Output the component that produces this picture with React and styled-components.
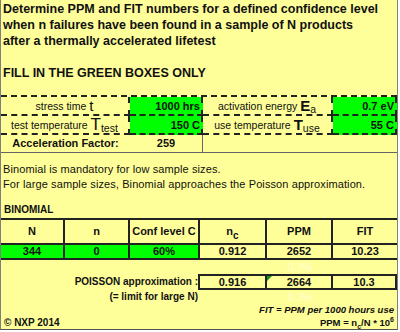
import React from 'react';
import styled, { createGlobalStyle } from 'styled-components';

const Global = createGlobalStyle`
  body {
    margin: 0;
    background: #fff;
    font-family: "Liberation Sans", Arial, sans-serif;
    color: #111;
  }
`;

const Frame = styled.div`
  width: 396px;
  height: 329px;
  background: #ffff99;
  border-left: 1px solid #7f7f7f;
  border-right: 1px solid #7f7f7f;
  border-bottom: 1px solid #555;
  display: flex;
  flex-direction: column;
  overflow: hidden;
`;

const Intro = styled.div`
  padding: 1px 2px 0;
  font-size: 12.5px;
  font-weight: bold;
  line-height: 16px;
  white-space: nowrap;

  p {
    margin: 0;
  }
  .fill {
    margin-top: 16px;
  }
`;

const ParamGrid = styled.div`
  margin-top: 14px;
  display: grid;
  grid-template-columns: 129px 73px 130px 1fr;
  grid-auto-rows: 19px;
  border-top: 2px dashed #222;
`;

const Label = styled.div`
  display: flex;
  align-items: center;
  justify-content: center;
  font-size: 10.5px;
  border-right: 2px dashed #222;
  border-bottom: 2px dashed #222;
  white-space: nowrap;
`;

const Value = styled.div`
  display: flex;
  align-items: center;
  justify-content: flex-end;
  padding-right: 1px;
  background: #00ff00;
  font-size: 11px;
  font-weight: bold;
  border-right: 2px dashed #222;
  border-bottom: 2px dashed #222;
`;

const Sym = styled.span`
  font-size: ${p => p.$size || 16}px;
  font-weight: ${p => (p.$bold ? 'bold' : 'normal')};
  margin-left: 3px;
  line-height: 1;
`;

const Sub = styled.span`
  font-size: ${p => p.$size || 10.5}px;
  position: relative;
  top: 4px;
  line-height: 1;
`;

const AccelRow = styled.div`
  display: grid;
  grid-template-columns: 129px 73px 1fr;
  height: 18px;
  border-bottom: 1px solid #666;
  font-size: 11px;
  font-weight: bold;

  div {
    display: flex;
    align-items: center;
    justify-content: center;
  }
  .num {
    border-right: 1px solid #666;
  }
`;

const Note = styled.div`
  padding: 9px 2px 0;
  font-size: 11px;
  line-height: 15px;
  letter-spacing: 0.1px;
  white-space: nowrap;

  p {
    margin: 0;
  }
`;

const SectionTitle = styled.div`
  padding: 11px 3px 0;
  font-size: 10px;
  font-weight: bold;
  line-height: 14px;
`;

const BinTable = styled.div`
  margin-top: 1px;
  display: grid;
  grid-template-columns: 64px 65px 70px 67px 66px 1fr;
  grid-template-rows: 25px 15px;
  border-top: 2px solid #222;
`;

const BinCell = styled.div`
  display: flex;
  align-items: center;
  justify-content: center;
  font-size: 11px;
  font-weight: bold;
  border-right: 2px solid #222;
  border-bottom: 2px solid #222;
  background: ${p => (p.$green ? '#00ff00' : 'transparent')};

  &:nth-child(6n) {
    border-right: none;
  }
`;

const PoissonArea = styled.div`
  display: grid;
  grid-template-columns: 199px 1fr;
  grid-template-rows: 14px 16px 14px;
  font-size: 10px;
  font-weight: bold;
`;

const LeftNote = styled.div`
  display: flex;
  align-items: center;
  justify-content: flex-end;
  padding-right: 2px;
  white-space: nowrap;
`;

const Ghost = styled.div`
  display: grid;
  grid-template-columns: 67px 66px 1fr;
  font-size: 11px;
  font-weight: normal;
  color: #ffffd6;

  span {
    grid-column: 2;
    display: flex;
    align-items: center;
    justify-content: center;
  }
`;

const PoissonBox = styled.div`
  display: grid;
  grid-template-columns: 67px 66px 1fr;
  border: 2px solid #222;
  margin-left: -2px;
`;

const PCell = styled.div`
  position: relative;
  display: flex;
  align-items: center;
  justify-content: center;
  font-size: 11px;
  font-weight: bold;
  border-right: ${p => (p.$last ? 'none' : '2px solid #222')};

  ${p =>
    p.$flag &&
    `&::before {
      content: '';
      position: absolute;
      top: 0;
      left: 0;
      border-top: 5px solid #1f8f1f;
      border-right: 5px solid transparent;
    }`}
`;

const FootLine = styled.div`
  display: flex;
  justify-content: ${p => (p.$split ? 'space-between' : 'flex-end')};
  align-items: center;
  padding: 0 3px;
  height: ${p => p.$h}px;
  font-size: 9.5px;
  font-weight: bold;
  font-style: ${p => (p.$italic ? 'italic' : 'normal')};
  white-space: nowrap;

  sup {
    font-size: 7px;
    line-height: 0;
  }
  sub {
    font-size: 7px;
    line-height: 0;
  }
  .copy {
    font-size: 10px;
    font-style: normal;
  }
`;

const App = () => {
  const binomial = {
    head: ['N', 'n', 'Conf level C', null, 'PPM', 'FIT'],
    values: ['344', '0', '60%', '0.912', '2652', '10.23'],
  };

  return (
    <>
      <Global />
      <Frame>
        <Intro>
          <p>Determine PPM and FIT numbers for a defined confidence level</p>
          <p>when n failures have been found in a sample of N products</p>
          <p>after a thermally accelerated lifetest</p>
          <p className="fill">FILL IN THE GREEN BOXES ONLY</p>
        </Intro>

        <ParamGrid>
          <Label>
            stress time<Sym $size={15}>t</Sym>
          </Label>
          <Value>1000 hrs</Value>
          <Label>
            activation energy<Sym $size={15} $bold>E</Sym>
            <Sub>a</Sub>
          </Label>
          <Value>0.7 eV</Value>

          <Label>
            test temperature<Sym $size={17}>T</Sym>
            <Sub>test</Sub>
          </Label>
          <Value>150 C</Value>
          <Label>
            use temperature<Sym $size={15} $bold>T</Sym>
            <Sub>use</Sub>
          </Label>
          <Value>55 C</Value>
        </ParamGrid>

        <AccelRow>
          <div>Acceleration Factor:</div>
          <div className="num">259</div>
          <div />
        </AccelRow>

        <Note>
          <p>Binomial is mandatory for low sample sizes.</p>
          <p>For large sample sizes, Binomial approaches the Poisson approximation.</p>
        </Note>

        <SectionTitle>BINOMIAL</SectionTitle>

        <BinTable>
          {binomial.head.map((h, i) => (
            <BinCell key={'h' + i}>
              {h === null ? (
                <span>
                  n<Sub $size={10}>c</Sub>
                </span>
              ) : (
                h
              )}
            </BinCell>
          ))}
          {binomial.values.map((v, i) => (
            <BinCell key={'v' + i} $green={i < 3}>
              {v}
            </BinCell>
          ))}
        </BinTable>

        <PoissonArea>
          <div />
          <Ghost>
            <span>0.3%</span>
          </Ghost>
          <LeftNote>POISSON approximation :</LeftNote>
          <PoissonBox>
            <PCell>0.916</PCell>
            <PCell $flag>2664</PCell>
            <PCell $last>10.3</PCell>
          </PoissonBox>
          <LeftNote>(= limit for large N)</LeftNote>
          <Ghost>
            <span>0.3%</span>
          </Ghost>
        </PoissonArea>

        <FootLine $h={13} $italic>
          FIT = PPM per 1000 hours use
        </FootLine>
        <FootLine $h={14} $split>
          <span className="copy">© NXP 2014</span>
          <span>
            PPM = n<sub>c</sub>/N * 10<sup>6</sup>
          </span>
        </FootLine>
      </Frame>
    </>
  );
};

export default App;
